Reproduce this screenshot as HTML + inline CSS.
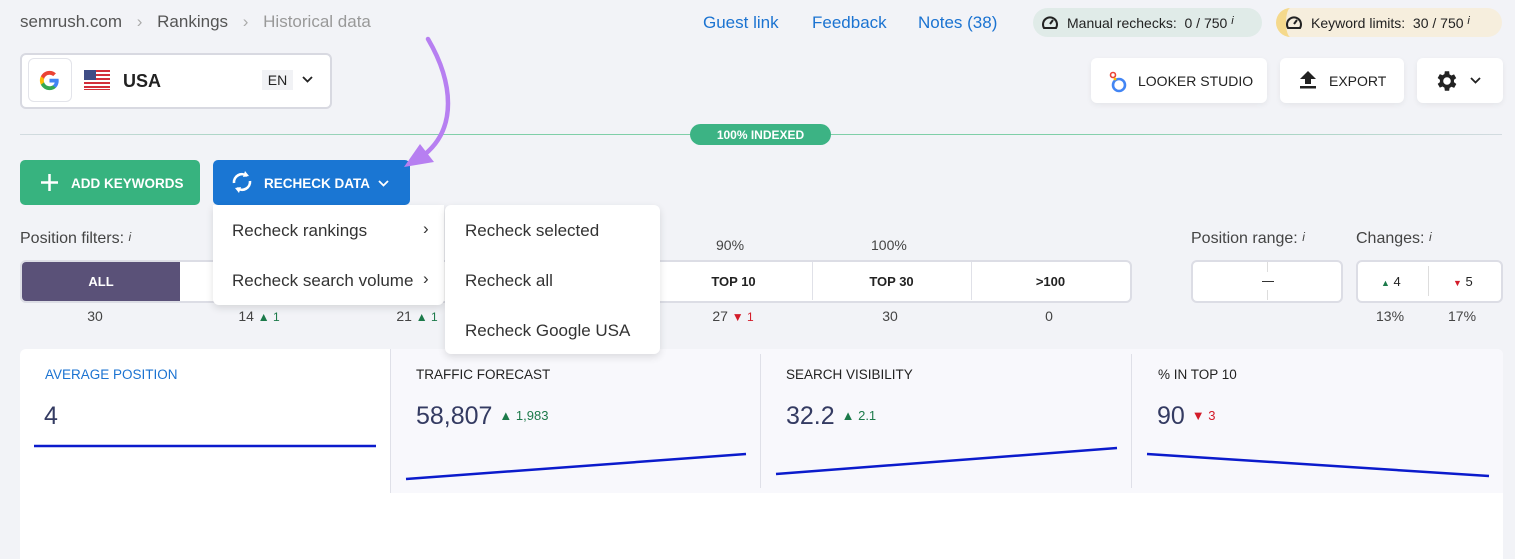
<!DOCTYPE html>
<html><head><meta charset="utf-8"><style>
*{box-sizing:border-box;margin:0;padding:0}
body{width:1515px;height:559px;overflow:hidden;background:#f2f3f7;font-family:"Liberation Sans",sans-serif;position:relative;color:#333}
.a{position:absolute}
.btn{position:absolute;background:#fff;border-radius:6px;box-shadow:0 2px 6px rgba(0,0,0,.06);font-size:14px;color:#222;display:flex;align-items:center}
.seg{position:absolute;top:262px;height:38px;width:158px;display:flex;align-items:center;justify-content:center;font-size:13px;font-weight:bold;color:#222;border-left:1px solid #e0e1e8}
.cnt{position:absolute;top:308px;font-size:14px;color:#444;transform:translateX(-50%)}
.up{color:#1c7a4a;font-size:12px}
.dn{color:#d31c2a;font-size:12px}
.mi{position:absolute;font-size:17px;color:#333}
.tab{position:absolute;top:349px;height:144px}
.tt{position:absolute;top:367px;font-size:13.5px;color:#222}
.tv{position:absolute;top:402px;font-size:25px;color:#343b62}
</style></head><body>
<!-- breadcrumb -->
<div class="a" style="left:20px;top:12px;font-size:17px;color:#555">semrush.com <span style="color:#aaa;margin:0 10px">›</span> Rankings <span style="color:#aaa;margin:0 10px">›</span> <span style="color:#999">Historical data</span></div>
<div class="a" style="left:703px;top:13px;font-size:17px;color:#1b73d1">Guest link</div>
<div class="a" style="left:812px;top:13px;font-size:17px;color:#1b73d1">Feedback</div>
<div class="a" style="left:918px;top:13px;font-size:17px;color:#1b73d1">Notes (38)</div>
<div class="a" style="left:1033px;top:8px;width:229px;height:29px;border-radius:15px;background:#e0ebe8;font-size:14px;color:#222;padding:7px 0 0 34px">Manual rechecks:&nbsp; 0 / 750 <i style="font-size:11px;vertical-align:top">i</i></div>
<svg class="a" style="left:1041px;top:14px" width="18" height="16" viewBox="0 0 18 16"><path d="M3 14A7 7 0 1 1 15 14Z" fill="none" stroke="#222" stroke-width="2"/><path d="M9 10L12 6" stroke="#222" stroke-width="2"/></svg>
<div class="a" style="left:1276px;top:8px;width:226px;height:29px;border-radius:15px;background:#f6eedd;border-left:10px solid #f5d98c;font-size:14px;color:#222;padding:7px 0 0 25px">Keyword limits:&nbsp; 30 / 750 <i style="font-size:11px;vertical-align:top">i</i></div>
<svg class="a" style="left:1285px;top:14px" width="18" height="16" viewBox="0 0 18 16"><path d="M3 14A7 7 0 1 1 15 14Z" fill="none" stroke="#222" stroke-width="2"/><path d="M9 10L12 6" stroke="#222" stroke-width="2"/></svg>
<!-- selector -->
<div class="a" style="left:20px;top:53px;width:312px;height:56px;background:#fff;border:2px solid #d8d9e1;border-radius:6px"></div>
<div class="a" style="left:28px;top:58px;width:44px;height:44px;border:1px solid #e3e4ea;border-radius:6px;background:#fff"></div>
<svg class="a" style="left:39px;top:70px" width="21" height="21" viewBox="0 0 48 48"><path fill="#4285F4" d="M45 24.5c0-1.6-.1-3.1-.4-4.5H24v8.5h11.8c-.5 2.7-2 5-4.4 6.6v5.5h7.1C42.6 36.8 45 31.1 45 24.5z"/><path fill="#34A853" d="M24 46c5.9 0 10.9-2 14.5-5.4l-7.1-5.5c-2 1.3-4.5 2.1-7.4 2.1-5.7 0-10.6-3.9-12.3-9.1H4.4v5.7C8 40.9 15.4 46 24 46z"/><path fill="#FBBC05" d="M11.7 28.1c-.4-1.3-.7-2.7-.7-4.1s.3-2.8.7-4.1v-5.7H4.4C2.9 17.1 2 20.5 2 24s.9 6.9 2.4 9.8l7.3-5.7z"/><path fill="#EA4335" d="M24 10.8c3.2 0 6.1 1.1 8.4 3.3l6.3-6.3C34.9 4.2 29.9 2 24 2 15.4 2 8 7.1 4.4 14.2l7.3 5.7c1.7-5.2 6.6-9.1 12.3-9.1z"/></svg>
<svg class="a" style="left:84px;top:70px" width="26" height="20" viewBox="0 0 26 20"><rect width="26" height="20" fill="#fff"/><g fill="#d22f3a"><rect y="0" width="26" height="2"/><rect y="4" width="26" height="2"/><rect y="8" width="26" height="2"/><rect y="12" width="26" height="2"/><rect y="16" width="26" height="2"/><rect y="19" width="26" height="1"/></g><rect width="12" height="10" fill="#3f4d86"/></svg>
<div class="a" style="left:123px;top:71px;font-size:18px;font-weight:bold;color:#222">USA</div>
<div class="a" style="left:262px;top:70px;width:31px;height:20px;background:#f1f2f5;font-size:14px;color:#222;text-align:center;padding-top:2px">EN</div>
<svg class="a" style="left:302px;top:76px" width="11" height="7" viewBox="0 0 11 7"><path d="M1 1l4.5 4.5L10 1" fill="none" stroke="#222" stroke-width="1.8"/></svg>
<!-- right buttons -->
<div class="btn" style="left:1091px;top:58px;width:176px;height:45px;padding-left:47px">LOOKER STUDIO</div>
<svg class="a" style="left:1108px;top:70px" width="20" height="24" viewBox="0 0 20 24"><circle cx="11" cy="15" r="6" fill="none" stroke="#4285f4" stroke-width="2.6"/><circle cx="5" cy="5" r="2.5" fill="none" stroke="#ea4335" stroke-width="1.6"/><circle cx="7" cy="9" r="1.4" fill="#fbbc05"/></svg>
<div class="btn" style="left:1280px;top:58px;width:124px;height:45px;padding-left:49px">EXPORT</div>
<svg class="a" style="left:1298px;top:70px" width="20" height="20" viewBox="0 0 20 20"><path d="M10 1L2 9h5v5h6V9h5z" fill="#222"/><rect x="2" y="16" width="16" height="2.5" fill="#222"/></svg>
<div class="btn" style="left:1417px;top:58px;width:86px;height:45px"></div>
<svg class="a" style="left:1434px;top:68px" width="26" height="26" viewBox="0 0 24 24"><path fill="#222" d="M19.4 13a7.5 7.5 0 0 0 0-2l2.1-1.6-2-3.5-2.5 1a7.7 7.7 0 0 0-1.7-1L15 3h-4l-.4 2.7a7.7 7.7 0 0 0-1.7 1l-2.5-1-2 3.5L6.5 11a7.5 7.5 0 0 0 0 2l-2.1 1.6 2 3.5 2.5-1c.5.4 1.1.8 1.7 1L11 21h4l.4-2.7c.6-.3 1.2-.6 1.7-1l2.5 1 2-3.5zM13 15.5a3.5 3.5 0 1 1 0-7 3.5 3.5 0 0 1 0 7z" transform="translate(-1 0)"/></svg>
<svg class="a" style="left:1470px;top:77px" width="11" height="7" viewBox="0 0 11 7"><path d="M1 1l4.5 4.5L10 1" fill="none" stroke="#222" stroke-width="1.8"/></svg>
<!-- indexed line -->
<div class="a" style="left:20px;top:134px;width:1482px;height:1px;background:linear-gradient(90deg,#d3dbe0,#7fcfa8 30%,#7fcfa8 70%,#d3dbe0)"></div>
<div class="a" style="left:690px;top:124px;width:141px;height:21px;border-radius:11px;background:#3cb384;color:#fff;font-size:12px;font-weight:bold;text-align:center;padding-top:4px">100% INDEXED</div>
<!-- action buttons -->
<div class="a" style="left:20px;top:160px;width:180px;height:45px;border-radius:5px;background:#37b37f;color:#fff;font-size:13.5px;font-weight:bold;padding:16px 0 0 51px">ADD KEYWORDS</div>
<svg class="a" style="left:40px;top:173px" width="19" height="19"><path d="M9.5 1v17M1 9.5h17" stroke="#fff" stroke-width="2.5"/></svg>
<div class="a" style="left:213px;top:160px;width:197px;height:45px;border-radius:5px;background:#1a76d3;color:#fff;font-size:13.5px;font-weight:bold;padding:16px 0 0 51px">RECHECK DATA</div>
<svg class="a" style="left:230px;top:169px" width="24" height="26" viewBox="0 0 24 26"><path d="M4 14a8 8 0 0 1 13-7" fill="none" stroke="#fff" stroke-width="2.6"/><path d="M15 2l4 5-6 1z" fill="#fff"/><path d="M20 12a8 8 0 0 1-13 7" fill="none" stroke="#fff" stroke-width="2.6"/><path d="M9 24l-4-5 6-1z" fill="#fff"/></svg>
<svg class="a" style="left:378px;top:180px" width="11" height="7" viewBox="0 0 11 7"><path d="M1 1l4.5 4.5L10 1" fill="none" stroke="#fff" stroke-width="1.8"/></svg>
<!-- purple arrow -->
<svg class="a" style="left:390px;top:30px" width="90" height="145" viewBox="0 0 90 145"><path d="M38 9C62 50 70 100 30 128" fill="none" stroke="#b77ff1" stroke-width="4.5" stroke-linecap="round"/><path d="M14 137L44 132 30 114z" fill="#b77ff1"/></svg>
<!-- filters -->
<div class="a" style="left:20px;top:230px;font-size:16px;color:#444">Position filters: <i style="font-size:12px;vertical-align:top">i</i></div>
<div class="a" style="left:20px;top:260px;width:1112px;height:43px;background:#fff;border:2px solid #dcdde5;border-radius:6px"></div>
<div class="a" style="left:22px;top:262px;width:158px;height:39px;background:#5a5178;color:#fff;font-size:13px;font-weight:bold;display:flex;align-items:center;justify-content:center;border-radius:4px 0 0 4px">ALL</div>
<div class="seg" style="left:654px">TOP 10</div>
<div class="seg" style="left:812px">TOP 30</div>
<div class="seg" style="left:971px">&gt;100</div>
<div class="a" style="left:716px;top:237px;font-size:14px;color:#444">90%</div>
<div class="a" style="left:871px;top:237px;font-size:14px;color:#444">100%</div>
<div class="cnt" style="left:95px">30</div>
<div class="cnt" style="left:259px">14 <span class="up">▲ 1</span></div>
<div class="cnt" style="left:417px">21 <span class="up">▲ 1</span></div>
<div class="cnt" style="left:733px">27 <span class="dn">▼ 1</span></div>
<div class="cnt" style="left:890px">30</div>
<div class="cnt" style="left:1049px">0</div>
<div class="a" style="left:1191px;top:230px;font-size:16px;color:#444">Position range: <i style="font-size:12px;vertical-align:top">i</i></div>
<div class="a" style="left:1191px;top:260px;width:152px;height:43px;background:#fff;border:2px solid #dcdde5;border-radius:6px"></div>
<div class="a" style="left:1267px;top:262px;width:1px;height:10px;background:#ddd"></div>
<div class="a" style="left:1267px;top:290px;width:1px;height:10px;background:#ddd"></div>
<div class="a" style="left:1262px;top:281px;width:12px;height:1px;background:#333"></div>
<div class="a" style="left:1356px;top:230px;font-size:16px;color:#444">Changes: <i style="font-size:12px;vertical-align:top">i</i></div>
<div class="a" style="left:1356px;top:260px;width:147px;height:43px;background:#fff;border:2px solid #dcdde5;border-radius:6px"></div>
<div class="a" style="left:1428px;top:266px;width:1px;height:30px;background:#ddd"></div>
<div class="a" style="left:1381px;top:274px;font-size:13px;color:#222"><span class="up" style="font-size:9px">▲</span> 4</div>
<div class="a" style="left:1453px;top:274px;font-size:13px;color:#222"><span class="dn" style="font-size:9px">▼</span> 5</div>
<div class="a" style="left:1376px;top:308px;font-size:14px;color:#444">13%</div>
<div class="a" style="left:1448px;top:308px;font-size:14px;color:#444">17%</div>
<!-- cards -->
<div class="a" style="left:20px;top:349px;width:1483px;height:210px;background:#fff;border-radius:6px 6px 0 0"></div>
<div class="tab" style="left:390px;width:1113px;background:#f8f8fc;border-left:1px solid #dfe0e8;border-radius:0 6px 0 0"></div>
<div class="a" style="left:760px;top:354px;width:1px;height:134px;background:#dfe0e8"></div>
<div class="a" style="left:1131px;top:354px;width:1px;height:134px;background:#dfe0e8"></div>
<div class="tt" style="left:45px;color:#1b73d1">AVERAGE POSITION</div>
<div class="tt" style="left:416px">TRAFFIC FORECAST</div>
<div class="tt" style="left:786px">SEARCH VISIBILITY</div>
<div class="tt" style="left:1158px">% IN TOP 10</div>
<div class="tv" style="left:44px">4</div>
<div class="tv" style="left:416px">58,807 <span class="up" style="font-size:13px;vertical-align:4px">▲ 1,983</span></div>
<div class="tv" style="left:786px">32.2 <span class="up" style="font-size:13px;vertical-align:4px">▲ 2.1</span></div>
<div class="tv" style="left:1157px">90 <span class="dn" style="font-size:13px;vertical-align:4px">▼ 3</span></div>
<svg class="a" style="left:0;top:0" width="1515" height="559"><g stroke="#0b1bcc" stroke-width="2.5" fill="none"><path d="M34 446L376 446"/><path d="M406 479L746 454"/><path d="M776 474L1117 448"/><path d="M1147 454L1489 476"/></g></svg>
<!-- dropdown -->
<div class="a" style="left:213px;top:205px;width:231px;height:100px;background:#fff;border-radius:0 0 6px 6px;box-shadow:0 3px 8px rgba(0,0,0,.12)"></div>
<div class="mi" style="left:232px;top:221px">Recheck rankings</div>
<div class="mi" style="left:232px;top:271px">Recheck search volume</div>
<div class="mi" style="left:423px;top:219px">›</div>
<div class="mi" style="left:423px;top:269px">›</div>
<div class="a" style="left:445px;top:205px;width:215px;height:149px;background:#fff;border-radius:6px;box-shadow:0 3px 8px rgba(0,0,0,.12)"></div>
<div class="mi" style="left:465px;top:221px">Recheck selected</div>
<div class="mi" style="left:465px;top:271px">Recheck all</div>
<div class="mi" style="left:465px;top:321px">Recheck Google USA</div>
</body></html>
